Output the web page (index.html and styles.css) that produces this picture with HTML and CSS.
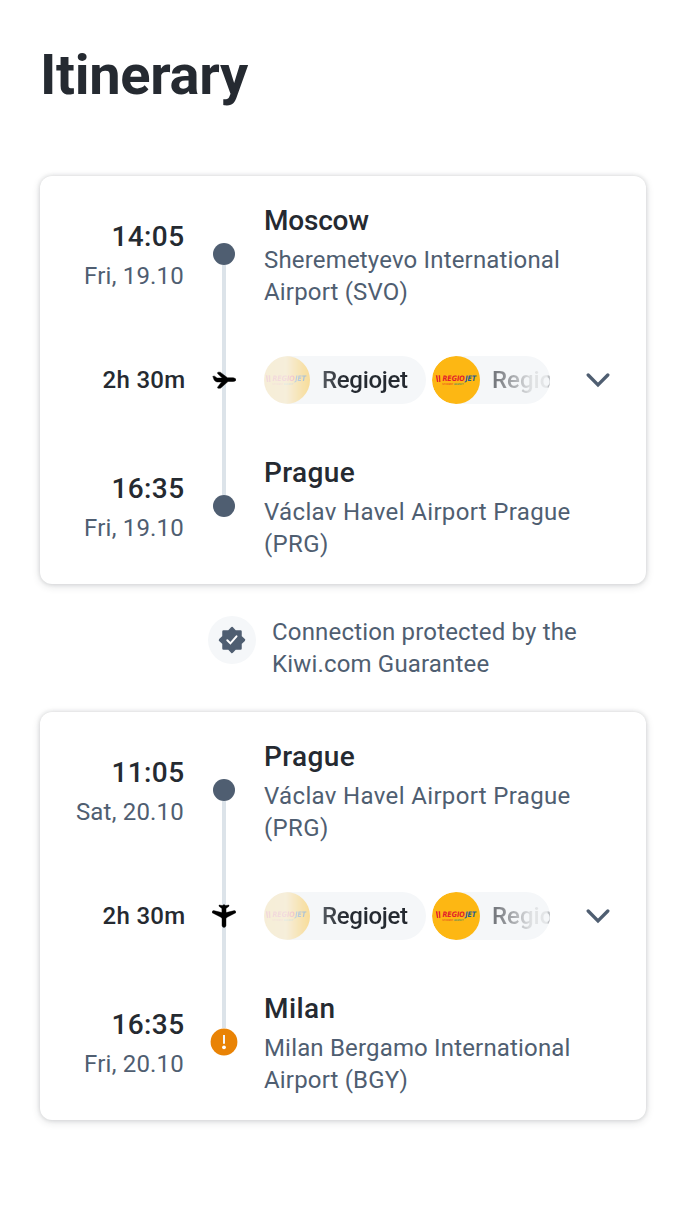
FILE: index.html
```html
<!DOCTYPE html>
<html lang="en">
<head>
<meta charset="utf-8">
<title>Itinerary</title>
<link rel="stylesheet" href="styles.css">
</head>
<body>
<main class="page">
  <h1 class="title">Itinerary</h1>

  <section class="card">
    <div class="when"><div class="time">14:05</div><div class="date">Fri, 19.10</div></div>
    <div class="rail">
      <span class="dot"></span><span class="line"></span><span class="dot"></span>
      <svg class="plane" viewBox="0 0 24 24"><path d="M.8 8.300L2.600 8.200L5 10.100H10.300L5.600 5.500Q5.200 4.300 6.500 4.200H8.200L15.500 9.800H21.300Q24 10.300 24 11.800Q23.800 13.300 21.300 13.500H16L9 19.800Q8.700 20.200 8 20.200H6Q5.200 20 5.800 18.900L9.600 13.900H5Q3.300 13.700 2.200 12Z" stroke="#000" stroke-width=".5" stroke-linejoin="round"/></svg>
    </div>
    <div class="place"><div class="city snug">Moscow</div><div class="airport">Sheremetyevo International Airport (SVO)</div></div>
    <div class="duration">2h 30m</div>
    <div class="carriers">
      <div class="chips">
        <div class="chip first"><span class="logo"><svg viewBox="0 0 48 48"><circle cx="24" cy="24" r="24" fill="#fdb713"/><path d="M3.800 19.200h1.500l1 6.800H5zM6.600 19.200h1.500l.3 6.800H7.200z" fill="#e2202c"/><text x="10.400" y="24.800" class="logo-word red" textLength="22.300" lengthAdjust="spacingAndGlyphs">REGIO</text><text x="33.200" y="24.800" class="logo-word blue" textLength="10.800" lengthAdjust="spacingAndGlyphs">JET</text><text x="10.300" y="29" class="logo-sub red" textLength="11" lengthAdjust="spacingAndGlyphs">STUDENT</text><text x="22" y="29" class="logo-sub green" textLength="9.500" lengthAdjust="spacingAndGlyphs">AGENCY</text></svg></span><span class="name">Regiojet</span></div>
        <div class="chip second"><span class="logo"><svg viewBox="0 0 48 48"><circle cx="24" cy="24" r="24" fill="#fdb713"/><path d="M3.800 19.200h1.500l1 6.800H5zM6.600 19.200h1.500l.3 6.800H7.200z" fill="#e2202c"/><text x="10.400" y="24.800" class="logo-word red" textLength="22.300" lengthAdjust="spacingAndGlyphs">REGIO</text><text x="33.200" y="24.800" class="logo-word blue" textLength="10.800" lengthAdjust="spacingAndGlyphs">JET</text><text x="10.300" y="29" class="logo-sub red" textLength="11" lengthAdjust="spacingAndGlyphs">STUDENT</text><text x="22" y="29" class="logo-sub green" textLength="9.500" lengthAdjust="spacingAndGlyphs">AGENCY</text></svg></span><span class="name">Regio</span></div>
      </div>
      <svg class="chevron" viewBox="0 0 24 16"><path d="M2.200 3L12 13L21.800 3" fill="none" stroke="#4f5e71" stroke-width="3.300" stroke-linecap="round"/></svg>
    </div>
    <div class="when"><div class="time">16:35</div><div class="date">Fri, 19.10</div></div>
    <div class="place"><div class="city">Prague</div><div class="airport wide">Václav Havel Airport Prague (PRG)</div></div>
  </section>

  <div class="guarantee">
    <span class="badge"><svg viewBox="0 0 28 28">
      <path d="M14 2L17.300 5.500L22.500 5.500L22.500 10.700L26 14L22.500 17.300L22.500 22.500L17.300 22.500L14 26L10.700 22.500L5.500 22.500L5.500 17.300L2 14L5.500 10.700L5.500 5.500L10.700 5.500Z" fill="#4f5e71" stroke="#4f5e71" stroke-width="2.500" stroke-linejoin="round"/>
      <path d="M9.300 14.300L12.400 17.400L18.500 10.300" fill="none" stroke="#fff" stroke-width="2" stroke-linecap="round"/>
    </svg></span>
    <p class="guarantee-text">Connection protected by the Kiwi.com Guarantee</p>
  </div>

  <section class="card">
    <div class="when"><div class="time">11:05</div><div class="date">Sat, 20.10</div></div>
    <div class="rail">
      <span class="dot"></span><span class="line"></span>
      <svg class="alert" viewBox="0 0 28 28"><circle cx="14" cy="14" r="13.400" fill="#e98305"/><path d="M14 7V15.800" stroke="#f5f7f9" stroke-width="2"/><circle cx="14" cy="19.300" r="1.900" fill="#fff"/></svg>
      <svg class="plane" viewBox="0 0 24 24"><path d="M7 1L10.500 1.500L12 .5L13.500 1.500L17 1V2.200L14 4.500L14.100 8.600L22.400 6.600Q24 6.600 23.900 8.700L15.600 13L14 14.200V21.500Q13.600 23.500 12 23.500Q10.400 23.500 10 21.500V14.200L8.400 13L.1 8.700Q0 6.600 1.600 6.600L9.900 8.600V4.500L7 2.200Z" stroke="#000" stroke-width=".4" stroke-linejoin="round"/></svg>
    </div>
    <div class="place"><div class="city">Prague</div><div class="airport wide">Václav Havel Airport Prague (PRG)</div></div>
    <div class="duration">2h 30m</div>
    <div class="carriers">
      <div class="chips">
        <div class="chip first"><span class="logo"><svg viewBox="0 0 48 48"><circle cx="24" cy="24" r="24" fill="#fdb713"/><path d="M3.800 19.200h1.500l1 6.800H5zM6.600 19.200h1.500l.3 6.800H7.200z" fill="#e2202c"/><text x="10.400" y="24.800" class="logo-word red" textLength="22.300" lengthAdjust="spacingAndGlyphs">REGIO</text><text x="33.200" y="24.800" class="logo-word blue" textLength="10.800" lengthAdjust="spacingAndGlyphs">JET</text><text x="10.300" y="29" class="logo-sub red" textLength="11" lengthAdjust="spacingAndGlyphs">STUDENT</text><text x="22" y="29" class="logo-sub green" textLength="9.500" lengthAdjust="spacingAndGlyphs">AGENCY</text></svg></span><span class="name">Regiojet</span></div>
        <div class="chip second"><span class="logo"><svg viewBox="0 0 48 48"><circle cx="24" cy="24" r="24" fill="#fdb713"/><path d="M3.800 19.200h1.500l1 6.800H5zM6.600 19.200h1.500l.3 6.800H7.200z" fill="#e2202c"/><text x="10.400" y="24.800" class="logo-word red" textLength="22.300" lengthAdjust="spacingAndGlyphs">REGIO</text><text x="33.200" y="24.800" class="logo-word blue" textLength="10.800" lengthAdjust="spacingAndGlyphs">JET</text><text x="10.300" y="29" class="logo-sub red" textLength="11" lengthAdjust="spacingAndGlyphs">STUDENT</text><text x="22" y="29" class="logo-sub green" textLength="9.500" lengthAdjust="spacingAndGlyphs">AGENCY</text></svg></span><span class="name">Regio</span></div>
      </div>
      <svg class="chevron" viewBox="0 0 24 16"><path d="M2.200 3L12 13L21.800 3" fill="none" stroke="#4f5e71" stroke-width="3.300" stroke-linecap="round"/></svg>
    </div>
    <div class="when"><div class="time">16:35</div><div class="date">Fri, 20.10</div></div>
    <div class="place"><div class="city">Milan</div><div class="airport">Milan Bergamo International Airport (BGY)</div></div>
  </section>
</main>
</body>
</html>
```
FILE: styles.css
```css
* { box-sizing: border-box; }
body { margin: 0; background: #fff; color: #252a31; font-family: Roboto, sans-serif; font-size: 24px; line-height: 32px; }
.page { padding: 40px; height: 1208px; }
.title { margin: 0 0 66px; font-size: 56px; line-height: 70px; font-weight: 700; letter-spacing: -0.3px; }
.card {
  display: grid;
  grid-template-columns: 144px 80px 1fr;
  grid-template-rows: 108px 144px 108px;
  height: 408px;
  padding: 24px 24px 24px 0;
  border-radius: 12px;
  background: #fff;
  box-shadow: 0 0 4px rgba(37, 42, 49, .16), 0 2px 8px rgba(37, 42, 49, .14);
}
.when { grid-column: 1; align-self: center; text-align: right; }
.time, .city { font-size: 28px; line-height: 42px; margin-bottom: 2px; font-weight: 500; letter-spacing: .4px; }
.time { margin-right: -.5px; }
.snug { letter-spacing: -.2px; }
.date, .airport, .guarantee-text { color: #4f5e71; letter-spacing: .17px; }
.airport.wide { letter-spacing: .35px; }
.date { white-space: nowrap; letter-spacing: .2px; }
.place { grid-column: 3; }
.airport { width: 330px; }
.duration { grid-column: 1; align-self: center; margin-right: -1.5px; text-align: right; font-weight: 500; letter-spacing: .3px; }
.rail { grid-column: 2; grid-row: 1 / 4; position: relative; display: flex; flex-direction: column; align-items: center; padding: 43px 0; }
.dot { width: 22px; height: 22px; border-radius: 50%; background: #4f5e71; flex: none; }
.line { width: 4px; flex: 1; background: #dce3e9; }
.plane { position: absolute; left: 28px; top: 168px; width: 24px; height: 24px; }
.alert { width: 28px; height: 28px; flex: none; margin-bottom: -3px; }
.carriers { grid-column: 3; display: flex; align-items: center; gap: 36px; }
.chips { display: flex; gap: 6px; width: 286px; height: 48px; }
.chip { display: flex; align-items: center; height: 48px; border-radius: 24px; background: #f5f7f9; overflow: hidden; flex: none; gap: 12px; font-weight: 500; }
.first { width: 162px; }
.second { width: 118px; }
.logo { display: flex; justify-content: flex-end; width: 46px; height: 48px; flex: none; }
.logo svg { width: 48px; height: 48px; flex: none; }
.second .logo { width: 48px; }
.first .logo svg { mask-image: linear-gradient(90deg, rgba(0,0,0,.15) 5%, rgba(0,0,0,.13) 50%, rgba(0,0,0,.42)); }
.name { color: transparent; letter-spacing: -.3px; background: linear-gradient(90deg, #555a60, #252a31 24px); -webkit-background-clip: text; background-clip: text; }
.second .name { background-image: linear-gradient(90deg, #777a7f 4px, #e0e2e4 40px, #e4e6e8 55px, #b0b3b7 57px); letter-spacing: 0; }
.logo-word { font: italic 700 7.500px "DejaVu Sans", sans-serif; }
.logo-sub { font: 700 2.800px "DejaVu Sans", sans-serif; }
.red { fill: #e2202c; }
.logo-sub.red { fill: #ed681e; }
.blue { fill: #1b5b97; }
.green { fill: #729156; }
.chevron { width: 24px; height: 16px; flex: none; }
.guarantee { display: flex; gap: 16px; margin: 32px 0; padding-left: 168px; height: 64px; }
.badge { display: flex; align-items: center; justify-content: center; width: 48px; height: 48px; border-radius: 50%; background: #f5f7f9; }
.badge svg { width: 28px; height: 28px; }
.guarantee-text { margin: 0; width: 340px; }
```
